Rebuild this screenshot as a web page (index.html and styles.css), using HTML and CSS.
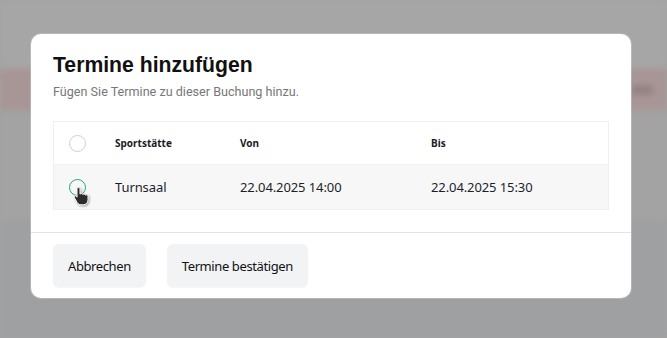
FILE: index.html
```html
<!DOCTYPE html>
<html lang="de">
<head>
    <meta charset="UTF-8">
    <meta name="viewport" content="width=device-width, initial-scale=1.0">
    <title>Termine hinzufügen</title>
    <link rel="stylesheet" href="styles.css">
</head>
<body>
    <div class="page">
        <div class="band band-top"></div>
        <div class="band band-alert"><span class="alert-blob"></span></div>
        <div class="band band-mid"></div>
        <div class="band band-low"></div>
    </div>

    <div class="modal">
        <div class="modal-head">
            <h1>Termine hinzufügen</h1>
            <p class="subtitle">Fügen Sie Termine zu dieser Buchung hinzu.</p>
        </div>

        <table class="slots">
            <thead>
                <tr>
                    <th class="col-check"><span class="radio"></span></th>
                    <th class="col-place">Sportstätte</th>
                    <th class="col-from">Von</th>
                    <th>Bis</th>
                </tr>
            </thead>
            <tbody>
                <tr>
                    <td class="col-check">
                        <span class="radio active"></span>
                        <svg class="cursor" width="16" height="20" viewBox="0 0 16 20">
                            <path d="M5.5 1.5c.9 0 1.5.6 1.5 1.5v5.2c.3-.5.8-.7 1.4-.7.7 0 1.2.4 1.4 1 .3-.4.7-.6 1.3-.6.8 0 1.3.5 1.4 1.2.3-.2.6-.3 1-.3.9 0 1.5.7 1.5 1.6v3.4c0 2.9-2 5-4.8 5H8c-1.7 0-2.8-.8-3.8-2.200L1.6 12.1c-.5-.8-.3-1.6.4-2 .6-.4 1.4-.2 1.9.4L4 11.2V3c0-.9.6-1.5 1.5-1.5z" fill="#2b2b2b" stroke="#fff" stroke-width="1"/>
                        </svg>
                    </td>
                    <td>Turnsaal</td>
                    <td>22.04.2025 14:00</td>
                    <td>22.04.2025 15:30</td>
                </tr>
            </tbody>
        </table>

        <div class="modal-foot">
            <button class="btn">Abbrechen</button>
            <button class="btn">Termine bestätigen</button>
        </div>
    </div>
</body>
</html>
```

FILE: styles.css
```css
body {
    margin: 0;
    width: 667px;
    height: 338px;
    overflow: hidden;
    background: #a3a3a3;
    font-family: "Noto Sans", Arial, sans-serif;
}

.page {
    display: flex;
    flex-direction: column;
    height: 338px;
    filter: blur(3px);
}

.band-top {
    height: 69px;
    background: #a6a6a6;
}

.band-alert {
    height: 41px;
    background: #a89595;
    display: flex;
    justify-content: flex-end;
    align-items: center;
    padding-right: 14px;
}

.alert-blob {
    width: 22px;
    height: 8px;
    border-radius: 4px;
    background: #8e7f80;
}

.band-mid {
    height: 110px;
    background: #a3a3a3;
}

.band-low {
    flex: 1;
    background: #9fa0a2;
}

.modal {
    position: absolute;
    top: 34px;
    left: 31px;
    width: 600px;
    background: #fff;
    border-radius: 10px;
    box-shadow: 0 0 0 1px rgba(200, 200, 210, 0.5);
}

.modal-head {
    padding: 18px 22px 0 22px;
}

h1 {
    margin: 0;
    font-family: "Liberation Sans", Arial, sans-serif;
    font-size: 21.2px;
    font-weight: bold;
    color: #111;
    line-height: 26px;
}

.subtitle {
    margin: 6px 0 0 0;
    font-family: Roboto, sans-serif;
    font-size: 12.6px;
    color: #777;
}

.slots {
    margin: 22px 22px 22px 22px;
    width: 556px;
    border-collapse: collapse;
    border: 1px solid #efefef;
    font-size: 13px;
    color: #1c1f2a;
}

.slots th {
    height: 42px;
    text-align: left;
    font-size: 10px;
    font-weight: bold;
    color: #1a1a24;
    background: #fff;
    padding: 0;
}

.slots td {
    height: 44px;
    padding: 0;
    background: #f7f7f7;
    border-top: 1px solid #f2f2f2;
    letter-spacing: -0.1px;
}

.col-check {
    width: 61px;
    position: relative;
}

.col-place {
    width: 125px;
}

.col-from {
    width: 191px;
}

.radio {
    display: block;
    width: 15px;
    height: 15px;
    margin-left: 15px;
    border: 1px solid #cfcfcf;
    border-radius: 50%;
    background: #fff;
}

.radio.active {
    border-color: #2aa37c;
    background: transparent;
}

.cursor {
    position: absolute;
    left: 19px;
    top: 21px;
    filter: drop-shadow(1px 1px 1px rgba(0, 0, 0, 0.35));
}

.modal-foot {
    display: flex;
    gap: 21px;
    padding: 11px 22px 11px 22px;
    border-top: 1px solid #e4e4e8;
}

.btn {
    height: 43px;
    padding: 0 15px;
    border: none;
    border-radius: 6px;
    background: #f2f3f5;
    font-family: "Noto Sans", Arial, sans-serif;
    font-size: 13px;
    letter-spacing: -0.4px;
    color: #111;
    box-shadow: 0 1px 1px rgba(0, 0, 0, 0.04);
}
```
